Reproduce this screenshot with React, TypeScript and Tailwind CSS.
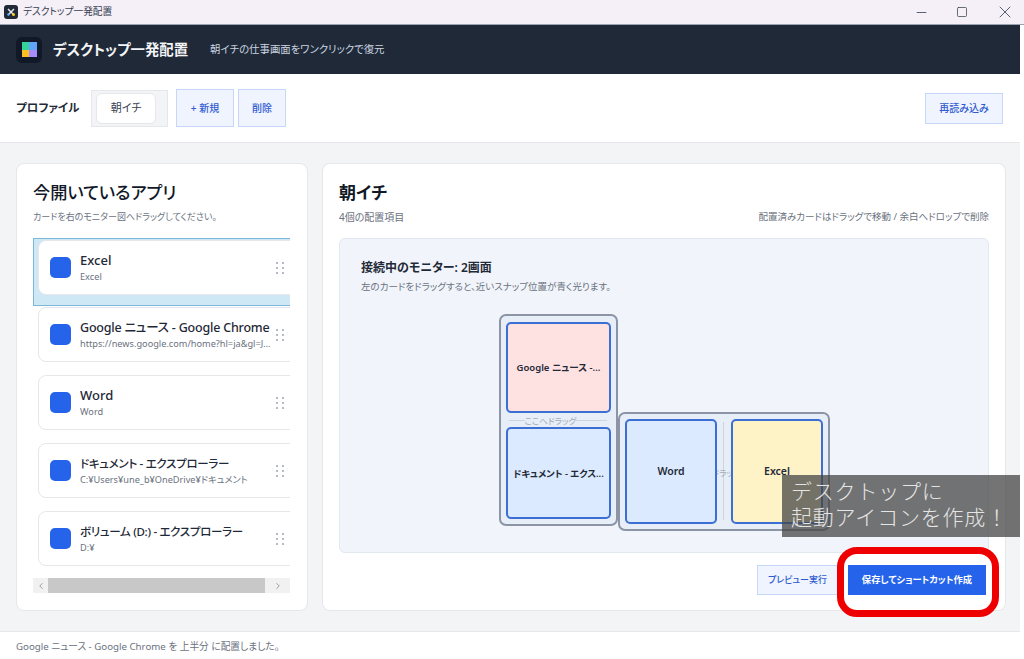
import { Minus, Square, X, ChevronLeft, ChevronRight } from "lucide-react";

const apps = [
  { title: "Excel", sub: "Excel", active: true, titleClass: "text-[13px]" },
  {
    title: "Google ニュース - Google Chrome",
    sub: "https://news.google.com/home?hl=ja&gl=JP&ceid=JP:ja",
    titleClass: "text-[12.5px] tracking-[-0.2px]",
  },
  { title: "Word", sub: "Word", titleClass: "text-[13px]" },
  {
    title: "ドキュメント - エクスプローラー",
    sub: "C:¥Users¥une_b¥OneDrive¥ドキュメント",
    titleClass: "text-[11.5px] tracking-[-0.3px]",
  },
  {
    title: "ボリューム (D:) - エクスプローラー",
    sub: "D:¥",
    titleClass: "text-[11.5px] tracking-[-0.3px]",
  },
];

function Grip() {
  return (
    <div className="grid grid-cols-2 gap-x-[4px] gap-y-[3px] w-[8px] shrink-0 ml-[3px]">
      {[0, 1, 2, 3, 4, 5].map((i) => (
        <span key={i} className="w-[2px] h-[2px] rounded-full bg-[#9ca3af]" />
      ))}
    </div>
  );
}

function AppRow({ title, sub, active, titleClass }: { title: string; sub: string; active?: boolean; titleClass: string }) {
  return (
    <div
      className={
        active
          ? "h-[68px] w-[257px] border border-r-0 border-[#7db8d8] bg-[#cfe8f5] pt-px pl-[4px]"
          : "h-[68px] w-[257px] pt-px pl-[5px]"
      }
    >
      <div className="flex items-center w-[262px] h-[55px] bg-white rounded-[8px] border border-[#e5e7eb] pl-[11px]">
        <div className="w-[21px] h-[21px] rounded-[5px] bg-[#2563eb] shrink-0" />
        <div className="ml-[9px] mt-px w-[193px] min-w-0">
          <div className={"leading-[17px] font-medium text-[#1f2937] whitespace-nowrap " + titleClass}>{title}</div>
          <div className="text-[9.2px] leading-[15px] text-[#6b7280] truncate">{sub}</div>
        </div>
        <Grip />
      </div>
    </div>
  );
}

function Placed({ label, className }: { label: string; className: string }) {
  return (
    <div
      className={
        "absolute flex items-center justify-center whitespace-nowrap rounded-[5px] border-2 border-[#3b6fd4] pt-px font-semibold text-[#1f2937] " +
        className
      }
    >
      {label}
    </div>
  );
}

export default function App() {
  return (
    <div className="relative w-[1024px] h-[659px] overflow-hidden bg-white font-['Noto_Sans','Noto_Sans_CJK_JP',sans-serif] [font-feature-settings:'palt']">
      {/* Title bar */}
      <div className="h-[25px] bg-[#f5eff7] border-b border-[#9ca3af] flex items-center pl-[4px] pr-[9px]">
        <div className="w-[14px] h-[14px] rounded-[3px] bg-[#1f2937] flex items-center justify-center">
          <svg width="10" height="10" viewBox="0 0 10 10">
            <path d="M2 2l6 6M8 2L2 8" stroke="#e5e7eb" strokeWidth="1.5" />
            <circle cx="7.5" cy="7.5" r="1.5" fill="#facc15" />
            <circle cx="2.5" cy="7.5" r="1.2" fill="#60a5fa" />
          </svg>
        </div>
        <span className="ml-[5px] text-[9.7px] text-[#374151]">デスクトップ一発配置</span>
        <div className="ml-auto flex items-center gap-[27px] text-[#374151]">
          <Minus size={15} strokeWidth={1.3} />
          <Square size={12} strokeWidth={1.5} />
          <X size={20} strokeWidth={1} />
        </div>
      </div>

      <div className="w-[1020px]">
        {/* App header */}
        <div className="h-[49px] bg-[#1f2937] flex items-center pl-[16px]">
          <div className="w-[26px] h-[26px] rounded-[6px] bg-[#111827] flex items-center justify-center">
            <div className="w-[15px] h-[15px] grid grid-cols-2">
              <span className="bg-[#34d399]" />
              <span className="bg-[#60a5fa]" />
              <span className="bg-[#fbbf24]" />
              <span className="bg-[#a78bfa]" />
            </div>
          </div>
          <span className="ml-[11px] text-[14.4px] font-bold text-[#f3f4f6]">デスクトップ一発配置</span>
          <span className="ml-[22px] text-[10.4px] text-[#cbd5e1]">朝イチの仕事画面をワンクリックで復元</span>
        </div>

        {/* Profile toolbar */}
        <div className="h-[69px] bg-white border-b border-[#e5e7eb] flex items-center pl-[16px] pr-[17px]">
          <span className="w-[62px] whitespace-nowrap text-[11.5px] font-semibold text-[#1f2937]">プロファイル</span>
          <div className="ml-[13px] w-[77px] h-[37px] bg-[#f3f4f6] border border-[#e5e7eb] pl-[4px] flex items-center">
            <div className="w-[60px] h-[31px] bg-white rounded-[6px] border border-[#e5e7eb] flex items-center justify-center text-[11px] text-[#374151]">
              朝イチ
            </div>
          </div>
          <button className="ml-[8px] w-[58px] h-[38px] bg-[#eff4ff] border border-[#c7d7fb] text-[10px] font-medium text-[#2f5bd0]">
            + 新規
          </button>
          <button className="ml-[4px] w-[48px] h-[38px] bg-[#eff4ff] border border-[#c7d7fb] text-[10px] font-medium text-[#2f5bd0]">
            削除
          </button>
          <button className="ml-auto w-[78px] h-[31px] bg-[#eff4ff] border border-[#c7d7fb] text-[10px] font-medium text-[#2f5bd0]">
            再読み込み
          </button>
        </div>

        {/* Main */}
        <div className="h-[488px] bg-[#f3f4f6] flex gap-[14px] pl-[16px] pt-[20px] pb-[20px]">
          <div className="w-[292px] bg-white rounded-[8px] border border-[#e5e7eb] pl-[16px] pt-[16px] flex flex-col">
            <h2 className="text-[17.2px] leading-[26px] font-medium text-[#111827]">今開いているアプリ</h2>
            <p className="mt-[3px] text-[9px] leading-[16px] text-[#6b7280]">カードを右のモニター図へドラッグしてください。</p>
            <div className="mt-[13px] w-[257px] overflow-hidden">
              {apps.map((a) => (
                <AppRow key={a.title} {...a} />
              ))}
            </div>
            <div className="w-[257px] h-[15px] bg-[#f1f1f1] flex items-center text-[#8a8a8a]">
              <div className="w-[15px] flex justify-center">
                <ChevronLeft size={10} />
              </div>
              <div className="w-[217px] h-[15px] bg-[#c8c8c8]" />
              <div className="w-[25px] flex justify-center">
                <ChevronRight size={10} />
              </div>
            </div>
          </div>

          <div className="w-[684px] bg-white rounded-[8px] border border-[#e5e7eb] px-[16px] pt-[16px] flex flex-col">
            <h2 className="text-[17px] leading-[26px] font-semibold text-[#111827]">朝イチ</h2>
            <div className="mt-[3px] flex justify-between text-[10px] leading-[16px] text-[#6b7280]">
              <span>4個の配置項目</span>
              <span className="text-[9.5px]">配置済みカードはドラッグで移動 / 余白へドロップで削除</span>
            </div>
            <div className="relative mt-[13px] h-[315px] bg-[#f1f5fb] border border-[#e2e8f0] rounded-[6px] pl-[21px] pt-[20px]">
              <div className="text-[12px] leading-[17px] font-semibold text-[#1f2937]">接続中のモニター: 2画面</div>
              <div className="mt-[4px] text-[9.5px] leading-[14px] text-[#6b7280]">左のカードをドラッグすると、近いスナップ位置が青く光ります。</div>

              {/* Monitor 1 */}
              <div className="absolute left-[159px] top-[75px] w-[119px] h-[212px] rounded-[7px] border-2 border-[#8b95a5] bg-[#e8eef7]" />
              <div className="absolute left-[169px] top-[181px] w-[98px] border-t border-[#cbd5e1]" />
              <div className="absolute left-[159px] top-[175px] w-[119px] pr-[16px] text-center text-[8.5px] leading-[14px] text-[#a3abb8]">
                <span className="bg-[#e8eef7]">ここへドラッグ</span>
              </div>
              <Placed label="Google ニュース -..." className="left-[166px] top-[83px] w-[105px] h-[91px] bg-[#fee2e2] text-[9.5px]" />
              <Placed label="ドキュメント - エクス..." className="left-[166px] top-[188px] w-[105px] h-[92px] bg-[#dbeafe] text-[9.3px]" />

              {/* Monitor 2 */}
              <div className="absolute left-[278px] top-[173px] w-[212px] h-[119px] rounded-[7px] border-2 border-[#8b95a5] bg-[#e8eef7]" />
              <div className="absolute left-[383px] top-[183px] h-[98px] border-l border-[#cbd5e1]" />
              <div className="absolute left-[278px] top-[227px] w-[210px] pr-[16px] text-center text-[8.5px] leading-[14px] text-[#a3abb8]">
                ここへドラッグ
              </div>
              <Placed label="Word" className="left-[285px] top-[180px] w-[92px] h-[105px] bg-[#dbeafe] text-[10.5px]" />
              <Placed label="Excel" className="left-[391px] top-[180px] w-[92px] h-[105px] bg-[#fef3c7] text-[10.5px]" />
            </div>
            <div className="mt-[12px] flex justify-end gap-[10px] pr-[3px]">
              <button className="w-[81px] h-[30px] bg-[#eff4ff] border border-[#c7d7fb] text-[9px] font-medium text-[#2f5bd0]">
                プレビュー実行
              </button>
              <button className="w-[138px] h-[30px] bg-[#2563eb] text-[9.3px] font-semibold text-white">
                保存してショートカット作成
              </button>
            </div>
          </div>
        </div>

        {/* Status bar */}
        <div className="h-[28px] flex items-center pl-[16px] pt-[3px] border-t border-[#e5e7eb] text-[9.7px] text-[#6b7280] bg-white">
          Google ニュース - Google Chrome を 上半分 に配置しました。
        </div>
      </div>

      {/* Callout over the screenshot */}
      <div className="absolute left-[782px] top-[475px] w-[238px] h-[62px] bg-[rgba(70,70,70,0.75)] pl-[9px] pt-[3px] text-[21px] leading-[26px] font-light tracking-[0.8px] text-[#e5e5e5] [font-feature-settings:normal]">
        デスクトップに
        <br />
        起動アイコンを作成！
      </div>
      <div className="absolute left-[837px] top-[547px] w-[162px] h-[70px] rounded-[20px] border-[7px] border-[#ee0000]" />
    </div>
  );
}
